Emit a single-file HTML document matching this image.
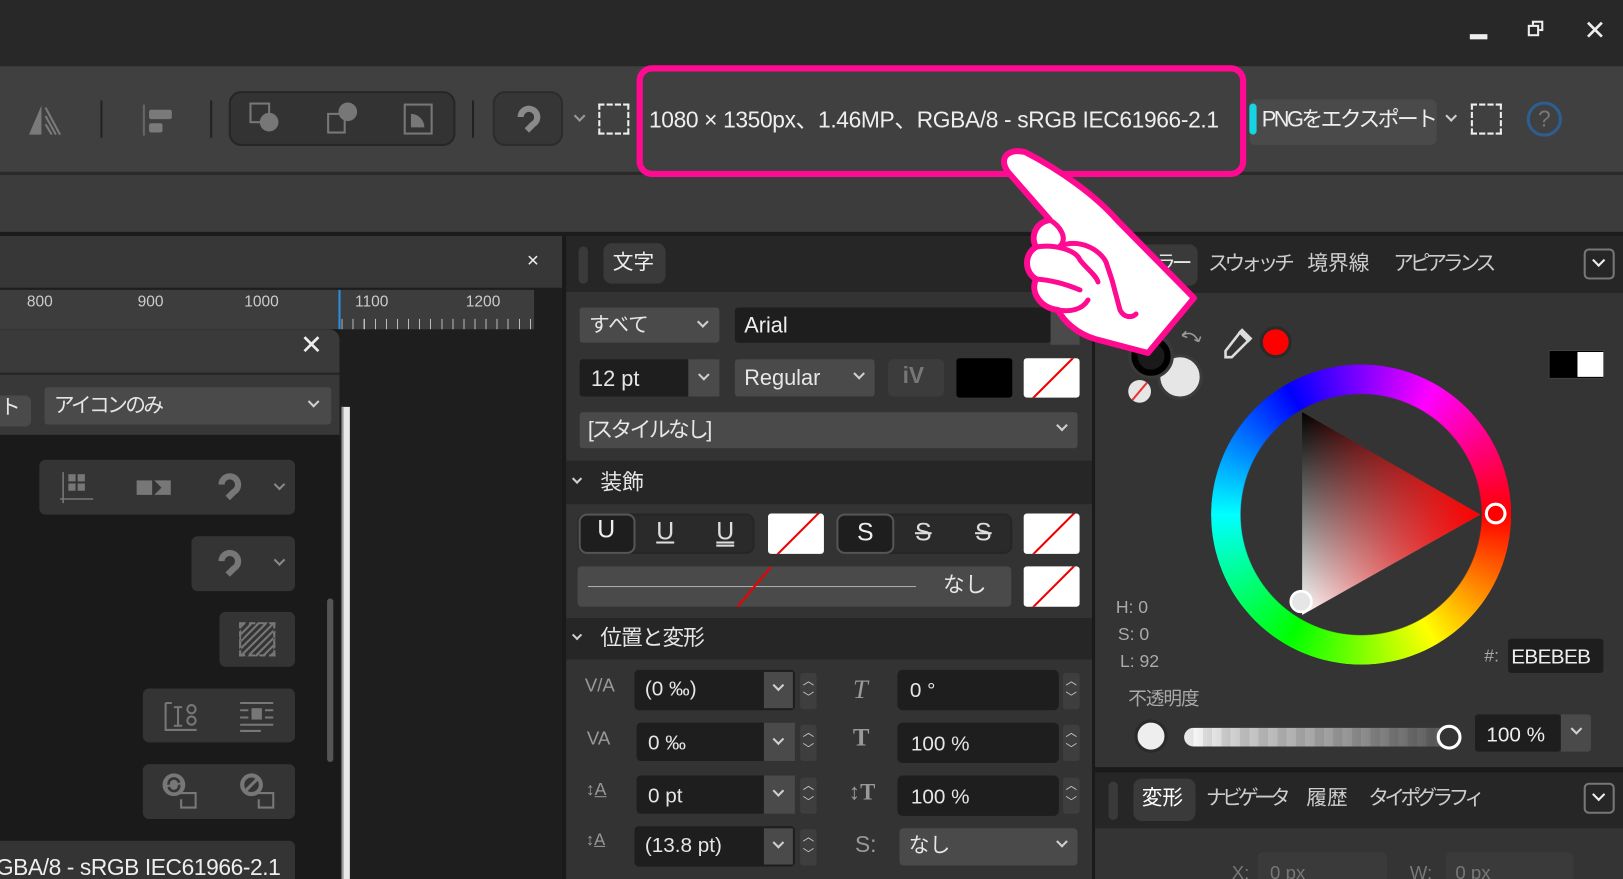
<!DOCTYPE html>
<html><head><meta charset="utf-8">
<style>
*{margin:0;padding:0;box-sizing:border-box}
html,body{width:1623px;height:879px;overflow:hidden;background:#282828}
body{font-family:"Liberation Sans","Noto Sans CJK JP",sans-serif;color:#e6e6e6}
#w{position:absolute;left:0;top:0;width:1568px;height:849px;transform-origin:0 0;transform:scale(1.03508,1.03534);overflow:hidden;background:#282828}
.a{position:absolute}
.ch{position:absolute;width:8px;height:8px;border:solid #cfcfcf;border-width:0 2px 2px 0;transform:rotate(45deg)}
.t{position:absolute;white-space:nowrap;line-height:1}
.sw{position:absolute;background:#fff;border-radius:3px;overflow:hidden}
.sw:after{content:"";position:absolute;left:-10%;top:50%;width:120%;height:1.5px;background:#e00;transform:rotate(-45deg)}
.dk{background:#1e1e1e}
.md{background:#4a4a4a}
.btn{position:absolute;background:#343434;border-radius:6px}
.k{letter-spacing:-4px}
</style></head><body>
<div id="w">
<!-- title bar -->
<div class="a" style="left:1420px;top:33px;width:17px;height:5px;background:#eee"></div>
<div class="a" style="left:1480px;top:20px;width:11px;height:10px;border:2px solid #eee"></div>
<div class="a" style="left:1476px;top:24px;width:11px;height:11px;border:2px solid #eee;background:#282828"></div>
<div class="t" style="left:1530px;top:16px;font-size:26px;color:#eee">✕</div>

<!-- toolbar -->
<div class="a" style="left:0;top:64px;width:1568px;height:102px;background:#404040"></div>
<div class="a" style="left:0;top:166px;width:1568px;height:3px;background:#2a2a2a"></div>
<div class="a" style="left:0;top:169px;width:1568px;height:55px;background:#3c3c3c"></div>
<div class="a" style="left:0;top:224px;width:1568px;height:4px;background:#1c1c1c"></div>
<svg class="a" style="left:26px;top:98px" width="40" height="36"><polygon points="2,32 14,4 14,32" fill="#7a7a7a"/><path d="M18,6 L32,32 M18,14 L28,32 M18,22 L24,32" stroke="#7a7a7a" stroke-width="2"/></svg>
<div class="a" style="left:97px;top:97px;width:2px;height:36px;background:#222"></div>
<div class="a" style="left:138px;top:101px;width:2px;height:30px;background:#666"></div>
<div class="a" style="left:144px;top:106px;width:22px;height:9px;background:#7a7a7a;border-radius:2px"></div>
<div class="a" style="left:144px;top:119px;width:13px;height:9px;background:#7a7a7a;border-radius:2px"></div>
<div class="a" style="left:203px;top:97px;width:2px;height:36px;background:#222"></div>
<div class="a" style="left:221px;top:88px;width:219px;height:53px;background:#333;border:2px solid #262626;border-radius:12px"></div>
<svg class="a" style="left:240px;top:98px" width="36" height="34"><rect x="2" y="2" width="18" height="18" fill="none" stroke="#777" stroke-width="2"/><circle cx="20" cy="20" r="9" fill="#777"/></svg>
<svg class="a" style="left:314px;top:98px" width="36" height="34"><rect x="3" y="12" width="16" height="18" fill="none" stroke="#777" stroke-width="2"/><circle cx="22" cy="10" r="9" fill="#777"/></svg>
<svg class="a" style="left:388px;top:98px" width="36" height="34"><rect x="3" y="3" width="26" height="28" fill="none" stroke="#777" stroke-width="2"/><path d="M9,25 L9,12 A13,13 0 0 1 22,25 Z" fill="#777"/></svg>
<div class="a" style="left:456px;top:97px;width:2px;height:36px;background:#222"></div>
<div class="a" style="left:476px;top:88px;width:68px;height:53px;background:#363636;border:2px solid #2c2c2c;border-radius:12px"></div>
<svg class="a" style="left:495px;top:100px" width="30" height="30"><path d="M8,13 A8,8 0 1 1 20,20 L14,26" fill="none" stroke="#8a8a8a" stroke-width="6"/></svg>
<div class="ch" style="left:556px;top:108px;border-color:#999"></div>
<div class="a" style="left:578px;top:100px;width:30px;height:30px;border:2px dashed #eee"></div>
<div class="t" style="left:627px;top:105px;font-size:22px;color:#eee;letter-spacing:-0.35px">1080 × 1350px、1.46MP、RGBA/8 - sRGB IEC61966-2.1</div>
<div class="a" style="left:1207px;top:96px;width:181px;height:44px;background:#4a4a4a;border-radius:6px"></div>
<div class="a" style="left:1207px;top:100px;width:7px;height:30px;background:#16d4e4;border-radius:4px"></div>
<div class="t" style="left:1219px;top:105px;font-size:21px;color:#eee;letter-spacing:-2.4px">PNGをエクスポート</div>
<div class="ch" style="left:1398px;top:108px"></div>
<div class="a" style="left:1421px;top:100px;width:30px;height:30px;border:2px dashed #eee"></div>
<div class="a" style="left:1475px;top:98px;width:34px;height:34px;border:3px solid #2e5e90;border-radius:50%;color:#777;font-size:22px;text-align:center;line-height:28px">?</div>

<!-- left area -->
<div class="a" style="left:0;top:228px;width:543px;height:50px;background:#373737"></div>
<div class="t" style="left:509px;top:242px;font-size:20px;color:#eee">×</div>
<div class="a" style="left:0;top:278px;width:543px;height:571px;background:#1e1e1e"></div>
<div class="a" style="left:0;top:280px;width:516px;height:38px;background:#3d3d3d"></div>
<div class="t" style="left:26px;top:284px;font-size:15px;color:#ccc">800</div>
<div class="t" style="left:133px;top:284px;font-size:15px;color:#ccc">900</div>
<div class="t" style="left:236px;top:284px;font-size:15px;color:#ccc">1000</div>
<div class="t" style="left:343px;top:284px;font-size:15px;color:#ccc">1100</div>
<div class="t" style="left:450px;top:284px;font-size:15px;color:#ccc">1200</div>
<div class="a" style="left:327px;top:280px;width:2px;height:38px;background:#2a8fe0"></div>
<div class="a" style="left:330px;top:308px;width:184px;height:10px;background:repeating-linear-gradient(90deg,#bbb 0 1px,transparent 1px 10.7px)"></div>
<div class="a" style="left:0;top:318px;width:328px;height:531px;background:#1a1a1a"></div>
<div class="a" style="left:0;top:318px;width:328px;height:42px;background:#3a3a3a;border-top-right-radius:10px"></div>
<div class="t" style="left:290px;top:320px;font-size:26px;color:#eee">✕</div>
<div class="a" style="left:0;top:360px;width:328px;height:2px;background:#262626"></div>
<div class="a" style="left:0;top:362px;width:328px;height:58px;background:#383838"></div>
<div class="a" style="left:0;top:382px;width:30px;height:30px;background:#4a4a4a;border-radius:0 6px 6px 0"></div>
<div class="t" style="left:0;top:384px;font-size:20px">ト</div>
<div class="a md" style="left:43px;top:374px;width:277px;height:36px;border-radius:3px"></div>
<div class="t" style="left:52px;top:382px;font-size:20px;letter-spacing:-2.5px">アイコンのみ</div>
<div class="ch" style="left:299px;top:384px"></div>
<div class="a" style="left:330px;top:393px;width:8px;height:456px;background:#e8e8e8;border-left:2px solid #999"></div>
<div class="a" style="left:316px;top:578px;width:6px;height:158px;background:#555;border-radius:3px"></div>
<div class="btn" style="left:38px;top:444px;width:247px;height:53px"></div>
<svg class="a" style="left:58px;top:454px" width="34" height="34"><path d="M3,2 V32 M0,28 H32" stroke="#777" stroke-width="1.5"/><rect x="8" y="4" width="7" height="7" fill="#777"/><rect x="17" y="4" width="7" height="7" fill="#777"/><rect x="8" y="13" width="7" height="7" fill="#777"/><rect x="17" y="13" width="7" height="7" fill="#777"/></svg>
<svg class="a" style="left:130px;top:460px" width="38" height="22"><rect x="2" y="4" width="15" height="14" fill="#777"/><path d="M19,4 H35 V18 H19 L26,11 Z" fill="#777"/></svg>
<svg class="a" style="left:206px;top:455px" width="30" height="30"><path d="M8,13 A8,8 0 1 1 20,20 L14,26" fill="none" stroke="#777" stroke-width="6"/></svg>
<div class="ch" style="left:266px;top:464px;border-color:#888"></div>
<div class="btn" style="left:185px;top:518px;width:100px;height:53px"></div>
<svg class="a" style="left:206px;top:529px" width="30" height="30"><path d="M8,13 A8,8 0 1 1 20,20 L14,26" fill="none" stroke="#777" stroke-width="6"/></svg>
<div class="ch" style="left:266px;top:537px;border-color:#888"></div>
<div class="btn" style="left:212px;top:591px;width:73px;height:53px"></div>
<div class="a" style="left:231px;top:601px;width:35px;height:33px;border:2px dashed #777;background:repeating-linear-gradient(-45deg,#777 0 2px,transparent 2px 5px)"></div>
<div class="btn" style="left:138px;top:665px;width:147px;height:52px"></div>
<svg class="a" style="left:158px;top:675px" width="36" height="36"><path d="M2,4 V30 H32 M2,4 H8 M10,8 H18 M14,8 V26 M10,26 H18" stroke="#777" stroke-width="2" fill="none"/><circle cx="27" cy="10" r="4" fill="none" stroke="#777" stroke-width="2"/><circle cx="27" cy="21" r="4" fill="none" stroke="#777" stroke-width="2"/></svg>
<svg class="a" style="left:230px;top:677px" width="36" height="32"><path d="M2,2 H34 M2,9 H10 M26,9 H34 M2,16 H10 M26,16 H34 M2,23 H34 M2,29 H22" stroke="#777" stroke-width="2"/><rect x="13" y="7" width="10" height="11" fill="#777"/></svg>
<div class="btn" style="left:138px;top:738px;width:147px;height:53px"></div>
<svg class="a" style="left:156px;top:746px" width="36" height="36"><circle cx="12" cy="12" r="11" fill="#777"/><path d="M7,12 A5,5 0 0 1 17,10 M17,12 A5,5 0 0 1 7,14" stroke="#343434" stroke-width="2.5" fill="none"/><path d="M18,20 H33 V34 H19 V26" stroke="#777" stroke-width="2" fill="none"/></svg>
<svg class="a" style="left:231px;top:746px" width="36" height="36"><circle cx="12" cy="12" r="9" fill="none" stroke="#777" stroke-width="4"/><path d="M7,17 L17,7" stroke="#777" stroke-width="3"/><path d="M18,20 H33 V34 H19 V26" stroke="#777" stroke-width="2" fill="none"/></svg>
<div class="btn" style="left:0;top:812px;width:285px;height:40px;border-radius:0 6px 0 0"></div>
<div class="t" style="left:-4px;top:827px;font-size:22px;color:#eee;letter-spacing:-0.4px">GBA/8 - sRGB IEC61966-2.1</div>

<!-- middle panel -->
<div class="a" style="left:543px;top:228px;width:4px;height:621px;background:#1a1a1a"></div>
<div class="a" style="left:547px;top:228px;width:508px;height:54px;background:#262626"></div>
<div class="a" style="left:559px;top:238px;width:9px;height:36px;background:#3a3a3a;border-radius:5px"></div>
<div class="a" style="left:583px;top:235px;width:60px;height:39px;background:#3a3a3a;border-radius:8px"></div>
<div class="t" style="left:592px;top:244px;font-size:20px;color:#eee">文字</div>
<div class="a" style="left:547px;top:282px;width:508px;height:567px;background:#333"></div>
<div class="a md" style="left:560px;top:297px;width:135px;height:34px;border-radius:3px"></div>
<div class="t" style="left:569px;top:304px;font-size:20px">すべて</div><div class="ch" style="left:675px;top:307px"></div>
<div class="a dk" style="left:710px;top:297px;width:305px;height:34px;border-radius:3px"></div>
<div class="t" style="left:719px;top:304px;font-size:21px;color:#eee">Arial</div>
<div class="a md" style="left:1015px;top:297px;width:28px;height:36px"></div>
<div class="a dk" style="left:560px;top:347px;width:105px;height:36px;border-radius:3px 0 0 3px"></div>
<div class="t" style="left:571px;top:356px;font-size:21px">12 pt</div>
<div class="a md" style="left:665px;top:347px;width:30px;height:36px"></div><div class="ch" style="left:676px;top:358px"></div>
<div class="a md" style="left:710px;top:347px;width:135px;height:36px;border-radius:3px"></div>
<div class="t" style="left:719px;top:355px;font-size:21px">Regular</div><div class="ch" style="left:826px;top:357px"></div>
<div class="a" style="left:858px;top:347px;width:54px;height:36px;background:#3c3c3c;border-radius:5px"></div>
<div class="t" style="left:872px;top:352px;font-size:22px;color:#777;font-weight:bold">iV</div>
<div class="a" style="left:924px;top:346px;width:54px;height:38px;background:#000;border-radius:3px"></div>
<div class="sw" style="left:989px;top:346px;width:54px;height:38px"></div>
<div class="a md" style="left:560px;top:398px;width:481px;height:35px;border-radius:3px"></div>
<div class="t" style="left:568px;top:405px;font-size:21px;letter-spacing:-2.5px">[スタイルなし]</div><div class="ch" style="left:1022px;top:407px"></div>
<div class="a" style="left:547px;top:445px;width:508px;height:42px;background:#262626"></div>
<div class="ch" style="left:554px;top:459px;width:7px;height:7px"></div>
<div class="t" style="left:580px;top:456px;font-size:21px">装飾</div>
<div class="a" style="left:558px;top:496px;width:171px;height:39px;background:#2a2a2a;border:2px solid #262626;border-radius:8px"></div>
<div class="a" style="left:559px;top:496px;width:55px;height:39px;background:#1e1e1e;border:2px solid #555;border-radius:8px"></div>
<div class="t" style="left:577px;top:500px;font-size:24px;color:#eee">U</div>
<div class="t" style="left:634px;top:502px;font-size:24px;color:#ddd;text-decoration:underline">U</div>
<div class="t" style="left:692px;top:502px;font-size:24px;color:#ddd;text-decoration:underline double">U</div>
<div class="sw" style="left:742px;top:496px;width:54px;height:39px"></div>
<div class="a" style="left:808px;top:496px;width:170px;height:39px;background:#2a2a2a;border:2px solid #262626;border-radius:8px"></div>
<div class="a" style="left:808px;top:496px;width:56px;height:39px;background:#1e1e1e;border:2px solid #555;border-radius:8px"></div>
<div class="t" style="left:828px;top:503px;font-size:24px;color:#eee">S</div>
<div class="t" style="left:884px;top:503px;font-size:24px;color:#ddd;text-decoration:line-through">S</div>
<div class="t" style="left:942px;top:503px;font-size:24px;color:#ddd;text-decoration:line-through">S</div>
<div class="sw" style="left:989px;top:496px;width:54px;height:39px"></div>
<div class="a md" style="left:558px;top:547px;width:419px;height:39px;border-radius:4px;overflow:hidden"><div class="a" style="left:10px;top:19px;width:317px;height:1px;background:#aaa"></div><div class="a" style="left:148px;top:0;width:1.5px;height:52px;background:#e00;transform-origin:0 0;transform:translate(38px,0) rotate(40deg)"></div></div>
<div class="t" style="left:911px;top:555px;font-size:21px">なし</div>
<div class="sw" style="left:989px;top:547px;width:54px;height:39px"></div>
<div class="a" style="left:547px;top:597px;width:508px;height:40px;background:#262626"></div>
<div class="ch" style="left:554px;top:610px;width:7px;height:7px"></div>
<div class="t" style="left:580px;top:606px;font-size:21px;letter-spacing:-1px">位置と変形</div>

<!-- rows -->
<div class="t" style="left:565px;top:653px;font-size:18px;color:#999">V/A</div>
<div class="t" style="left:567px;top:704px;font-size:18px;color:#999">VA</div>
<div class="t" style="left:566px;top:754px;font-size:17px;color:#999">↕<u>A</u></div>
<div class="t" style="left:566px;top:804px;font-size:16px;color:#999">↕<u>A</u></div>
<div class="a dk" style="left:613px;top:647px;width:155px;height:39px;border-radius:4px"></div><div class="a md" style="left:738px;top:649px;width:28px;height:35px"></div>
<div class="a dk" style="left:615px;top:698px;width:153px;height:37px;border-radius:4px"></div><div class="a md" style="left:738px;top:698px;width:30px;height:37px"></div>
<div class="a dk" style="left:615px;top:749px;width:153px;height:37px;border-radius:4px"></div><div class="a md" style="left:738px;top:749px;width:30px;height:37px"></div>
<div class="a dk" style="left:613px;top:798px;width:155px;height:39px;border-radius:4px"></div><div class="a md" style="left:738px;top:800px;width:28px;height:35px"></div>
<div class="t" style="left:623px;top:656px;font-size:20px">(0 ‰)</div>
<div class="t" style="left:626px;top:708px;font-size:20px">0 ‰</div>
<div class="t" style="left:626px;top:759px;font-size:20px">0 pt</div>
<div class="t" style="left:623px;top:807px;font-size:20px">(13.8 pt)</div>
<div class="ch" style="left:748px;top:658px"></div><div class="ch" style="left:748px;top:710px"></div><div class="ch" style="left:748px;top:760px"></div><div class="ch" style="left:748px;top:810px"></div>
<div class="a" style="left:773px;top:650px;width:16px;height:35px;background:#3e3e3e;border-radius:3px;font-size:11px;color:#ccc;text-align:center;line-height:16px">︿<br>﹀</div>
<div class="a" style="left:773px;top:700px;width:16px;height:35px;background:#3e3e3e;border-radius:3px;font-size:11px;color:#ccc;text-align:center;line-height:16px">︿<br>﹀</div>
<div class="a" style="left:773px;top:751px;width:16px;height:35px;background:#3e3e3e;border-radius:3px;font-size:11px;color:#ccc;text-align:center;line-height:16px">︿<br>﹀</div>
<div class="a" style="left:773px;top:801px;width:16px;height:35px;background:#3e3e3e;border-radius:3px;font-size:11px;color:#ccc;text-align:center;line-height:16px">︿<br>﹀</div>
<div class="t" style="left:824px;top:653px;font-size:26px;color:#999;font-family:'Liberation Serif',serif;font-style:italic">T</div>
<div class="t" style="left:824px;top:701px;font-size:24px;color:#999;font-family:'Liberation Serif',serif;font-weight:bold">T</div>
<div class="t" style="left:820px;top:754px;font-size:22px;color:#999;font-family:'Liberation Serif',serif;font-weight:bold">↕T</div>
<div class="t" style="left:826px;top:805px;font-size:22px;color:#999">S:</div>
<div class="a dk" style="left:867px;top:647px;width:156px;height:39px;border-radius:5px"></div>
<div class="a dk" style="left:867px;top:698px;width:156px;height:39px;border-radius:5px"></div>
<div class="a dk" style="left:867px;top:749px;width:156px;height:39px;border-radius:5px"></div>
<div class="t" style="left:879px;top:657px;font-size:20px">0 °</div>
<div class="t" style="left:880px;top:709px;font-size:20px">100 %</div>
<div class="t" style="left:880px;top:760px;font-size:20px">100 %</div>
<div class="a" style="left:1027px;top:650px;width:16px;height:35px;background:#3e3e3e;border-radius:3px;font-size:11px;color:#ccc;text-align:center;line-height:16px">︿<br>﹀</div>
<div class="a" style="left:1027px;top:700px;width:16px;height:35px;background:#3e3e3e;border-radius:3px;font-size:11px;color:#ccc;text-align:center;line-height:16px">︿<br>﹀</div>
<div class="a" style="left:1027px;top:751px;width:16px;height:35px;background:#3e3e3e;border-radius:3px;font-size:11px;color:#ccc;text-align:center;line-height:16px">︿<br>﹀</div>
<div class="a md" style="left:869px;top:800px;width:172px;height:36px;border-radius:4px"></div>
<div class="t" style="left:878px;top:807px;font-size:20px">なし</div><div class="ch" style="left:1022px;top:809px"></div>

<!-- right panel -->
<div class="a" style="left:1055px;top:228px;width:3px;height:621px;background:#1a1a1a"></div>
<div class="a" style="left:1058px;top:228px;width:510px;height:55px;background:#262626"></div>
<div class="a" style="left:1095px;top:236px;width:62px;height:40px;background:#3a3a3a;border-radius:8px"></div>
<div class="t k" style="left:1100px;top:245px;font-size:20px">カラー</div>
<div class="t k" style="left:1167px;top:245px;font-size:20px;color:#ccc">スウォッチ</div>
<div class="t" style="left:1263px;top:245px;font-size:20px;color:#ccc">境界線</div>
<div class="t k" style="left:1346px;top:245px;font-size:20px;color:#ccc">アピアランス</div>
<div class="a" style="left:1530px;top:240px;width:30px;height:30px;border:2px solid #777;border-radius:5px"></div><div class="ch" style="left:1540px;top:247px;width:9px;height:9px;border-color:#eee"></div>
<div class="a" style="left:1058px;top:283px;width:510px;height:458px;background:#343434"></div>
<div class="a" style="left:1118px;top:342px;width:44px;height:44px;border-radius:50%;background:#e6e6e6;border:3px solid #3c3c3c"></div>
<div class="a" style="left:1090px;top:322px;width:44px;height:44px;border-radius:50%;background:#1a1a1a;border:3px solid #3a3a3a;box-shadow:inset 0 0 0 6px #000"></div>
<div class="a" style="left:1090px;top:367px;width:22px;height:22px;border-radius:50%;background:#e6e6e6;overflow:hidden"><div class="a" style="left:-2px;top:10px;width:26px;height:2px;background:#e33;transform:rotate(-50deg)"></div></div>
<svg class="a" style="left:1138px;top:316px" width="26" height="26"><path d="M4,8 Q14,2 20,14" stroke="#999" stroke-width="1.5" fill="none"/><path d="M4,8 L8,4 M4,8 L9,10 M20,14 L16,12 M20,14 L22,9" stroke="#999" stroke-width="1.5"/></svg>
<svg class="a" style="left:1178px;top:313px" width="36" height="36"><path d="M20,8 L28,16 L12,32 L6,32 L6,26 Z" fill="none" stroke="#ddd" stroke-width="2.5"/><path d="M22,4 L32,14 L28,18 L18,8 Z" fill="#ddd"/></svg>
<div class="a" style="left:1217px;top:315px;width:31px;height:31px;border-radius:50%;background:#f00;border:3px solid #2a2a2a"></div>
<div class="a" style="left:1496px;top:338px;width:54px;height:28px;background:#000;border:1px solid #444"></div>
<div class="a" style="left:1524px;top:340px;width:25px;height:24px;background:#fff"></div>
<div class="a" style="left:1170px;top:352px;width:290px;height:290px;border-radius:50%;background:conic-gradient(#8000ff 0deg,#ff00ff 30deg,#ff0000 90deg,#ffff00 150deg,#00ff00 210deg,#00ffff 270deg,#0000ff 330deg,#8000ff 360deg);-webkit-mask:radial-gradient(circle,transparent 116px,#000 117px);mask:radial-gradient(circle,transparent 116px,#000 117px)"></div>
<svg class="a" style="left:1170px;top:352px" width="290" height="290">
<defs><linearGradient id="bw" x1="0" y1="0" x2="0" y2="1"><stop offset="0" stop-color="#000"/><stop offset="1" stop-color="#fff"/></linearGradient>
<linearGradient id="rd" x1="0" y1="0" x2="1" y2="0"><stop offset="0" stop-color="#f00" stop-opacity="0"/><stop offset="1" stop-color="#f00" stop-opacity="1"/></linearGradient></defs>
<polygon points="88,46 260,145 88,242" fill="url(#bw)"/>
<polygon points="88,46 260,145 88,242" fill="url(#rd)"/>
<circle cx="275" cy="144" r="9" fill="#f00" stroke="#fff" stroke-width="3"/>
<circle cx="87" cy="229" r="10" fill="#e6e6e6" stroke="#fff" stroke-width="2.5"/>
</svg>
<div class="t" style="left:1078px;top:578px;font-size:17px;color:#aaa">H: 0</div>
<div class="t" style="left:1080px;top:604px;font-size:17px;color:#aaa">S: 0</div>
<div class="t" style="left:1082px;top:630px;font-size:17px;color:#aaa">L: 92</div>
<div class="t" style="left:1434px;top:625px;font-size:17px;color:#aaa">#:</div>
<div class="a dk" style="left:1457px;top:617px;width:92px;height:33px;border-radius:3px"></div>
<div class="t" style="left:1460px;top:625px;font-size:20px;color:#eee;letter-spacing:-0.6px">EBEBEB</div>
<div class="t" style="left:1090px;top:666px;font-size:18px;color:#aaa;letter-spacing:-1px">不透明度</div>
<div class="a" style="left:1096px;top:695px;width:32px;height:32px;border-radius:50%;background:#eee;border:3px solid #2a2a2a"></div>
<div class="a" style="left:1144px;top:703px;width:256px;height:18px;border-radius:9px;background:linear-gradient(90deg,#fff,#ccc 20%,#999 60%,#555);overflow:hidden"><div style="width:100%;height:100%;background:repeating-linear-gradient(90deg,rgba(0,0,0,.08) 0 9px,transparent 9px 18px)"></div></div>
<div class="a" style="left:1388px;top:700px;width:24px;height:24px;border-radius:50%;background:#343434;border:3px solid #fff"></div>
<div class="a dk" style="left:1425px;top:690px;width:83px;height:36px;border-radius:3px"></div>
<div class="t" style="left:1436px;top:700px;font-size:20px;color:#eee">100 %</div>
<div class="a md" style="left:1508px;top:690px;width:29px;height:36px;border-radius:0 3px 3px 0"></div><div class="ch" style="left:1519px;top:700px"></div>
<div class="a" style="left:1058px;top:741px;width:510px;height:5px;background:#1a1a1a"></div>
<div class="a" style="left:1058px;top:746px;width:510px;height:54px;background:#262626"></div>
<div class="a" style="left:1071px;top:755px;width:9px;height:37px;background:#3a3a3a;border-radius:5px"></div>
<div class="a" style="left:1095px;top:752px;width:60px;height:41px;background:#3a3a3a;border-radius:8px"></div>
<div class="t" style="left:1103px;top:761px;font-size:20px;color:#fff">変形</div>
<div class="t k" style="left:1165px;top:761px;font-size:20px;color:#ccc;letter-spacing:-4.5px">ナビゲータ</div>
<div class="t" style="left:1262px;top:761px;font-size:20px;color:#ccc">履歴</div>
<div class="t k" style="left:1322px;top:761px;font-size:20px;color:#ccc;letter-spacing:-4.5px">タイポグラフィ</div>
<div class="a" style="left:1530px;top:756px;width:30px;height:30px;border:2px solid #777;border-radius:5px"></div><div class="ch" style="left:1540px;top:763px;width:9px;height:9px;border-color:#eee"></div>
<div class="a" style="left:1058px;top:800px;width:510px;height:49px;background:#343434"></div>
<div class="t" style="left:1190px;top:834px;font-size:18px;color:#777">X:</div>
<div class="a" style="left:1215px;top:823px;width:125px;height:30px;background:#3a3a3a;border-radius:5px"></div>
<div class="t" style="left:1227px;top:834px;font-size:18px;color:#777">0 px</div>
<div class="t" style="left:1362px;top:834px;font-size:18px;color:#777">W:</div>
<div class="a" style="left:1397px;top:823px;width:123px;height:30px;background:#3a3a3a;border-radius:5px"></div>
<div class="t" style="left:1406px;top:834px;font-size:18px;color:#777">0 px</div>

<!-- highlight -->
<div class="a" style="left:615px;top:63px;width:589px;height:108px;border:6px solid #ff0a91;border-radius:15px"></div>
</div>
<!-- hand in original coords -->
<svg class="a" style="position:absolute;left:0;top:0" width="1623" height="879">
<path d="M1008,172 C998,158 1008,148 1025,152 C1060,170 1095,195 1117,220 L1194,298 L1148,353 L1095,339 C1078,334 1064,322 1058,310 C1040,308 1030,292 1036,279 C1024,272 1024,254 1036,247 C1030,236 1036,222 1050,220 Z" fill="#fff" stroke="#ff0a91" stroke-width="6" stroke-linejoin="round"/>
<path d="M1050,220 C1060,226 1068,238 1060,246 M1036,247 C1055,244 1076,250 1080,260 C1086,268 1096,275 1098,282 M1036,279 C1052,280 1068,285 1080,290 M1058,310 C1070,312 1082,310 1088,300 M1060,246 C1080,238 1100,250 1106,262 L1112,280 L1120,310 C1124,318 1132,318 1136,314" fill="none" stroke="#ff0a91" stroke-width="5" stroke-linecap="round"/>
</svg>
</body></html>
